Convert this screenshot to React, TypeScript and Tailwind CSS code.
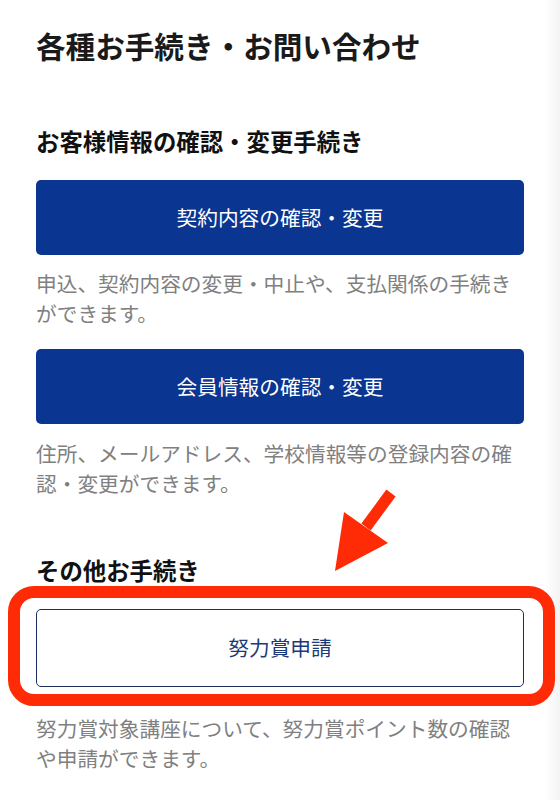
import React from "react";

const font = { fontFamily: '"Noto Sans CJK JP", "Noto Sans", sans-serif' };

export default function App() {
  return (
    <div className="relative w-[560px] h-[800px] overflow-hidden bg-white" style={font}>
      <div className="absolute right-0 top-0 h-full w-[16px] bg-gradient-to-r from-white to-[#f3f3f3]" />
      <div className="relative flex flex-col px-[36px] pt-[24px]">
        <h1 className="text-[29.6px] leading-[44px] font-bold text-[#1a1a1a] tracking-[0px]">
          各種お手続き・お問い合わせ
        </h1>

        <h2 className="mt-[56px] text-[23.4px] leading-[34px] font-bold text-[#111]">
          お客様情報の確認・変更手続き
        </h2>
        <button className="mt-[22px] h-[75px] w-full rounded-[5px] bg-[#0a3591] text-[20.7px] text-white flex items-center justify-center">
          契約内容の確認・変更
        </button>
        <p className="mt-[13px] text-[20.7px] leading-[30px] text-[#808080]">
          申込、契約内容の変更・中止や、支払関係の手続きができます。
        </p>

        <button className="mt-[21px] h-[75px] w-full rounded-[5px] bg-[#0a3591] text-[20.7px] text-white flex items-center justify-center">
          会員情報の確認・変更
        </button>
        <p className="mt-[14px] text-[20.7px] leading-[30px] text-[#808080]">
          住所、メールアドレス、学校情報等の登録内容の確認・変更ができます。
        </p>

        <h2 className="mt-[55px] text-[23.4px] leading-[34px] font-bold text-[#111]">
          その他お手続き
        </h2>
        <button className="mt-[22px] h-[78px] w-full rounded-[5px] border border-[#1c2c5e] bg-white text-[20.7px] text-[#1c3a78] flex items-center justify-center">
          努力賞申請
        </button>
        <p className="mt-[26px] text-[20.7px] leading-[30px] text-[#808080]">
          努力賞対象講座について、努力賞ポイント数の確認や申請ができます。
        </p>
      </div>

      {/* red highlight frame */}
      <div className="absolute left-[8px] top-[586px] w-[547px] h-[120px] rounded-[26px] border-[12px] border-[#ff2a06]" />

      {/* red arrow */}
      <svg className="absolute left-[320px] top-[480px]" width="100" height="100" viewBox="0 0 100 100">
        <line x1="71" y1="13" x2="46" y2="47" stroke="#ff2a06" strokeWidth="11.5" />
        <polygon points="24,32 68,63 15,91" fill="#ff2a06" />
      </svg>
    </div>
  );
}
